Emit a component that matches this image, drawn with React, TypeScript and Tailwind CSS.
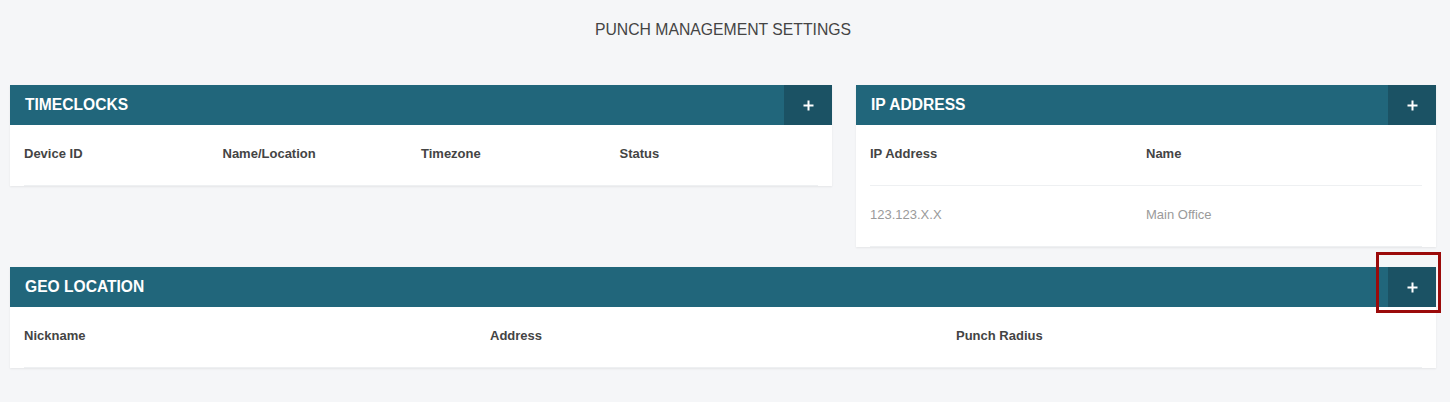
import { ReactNode } from "react";

function PlusButton() {
  return (
    <button className="flex h-full w-[48px] items-center justify-center bg-[#1b5264]">
      <svg width="11" height="11" viewBox="0 0 11 11">
        <path d="M5.5 0.5v10M0.5 5.5h10" stroke="white" strokeWidth="2" />
      </svg>
    </button>
  );
}

function Card({
  title,
  children,
  highlight,
}: {
  title: string;
  children: ReactNode;
  highlight?: boolean;
}) {
  return (
    <section className="bg-white shadow-[0_1px_2px_rgba(0,0,0,0.07)]">
      <header className="relative flex h-[40px] items-center justify-between bg-[#21667b]">
        <h2 className="pl-[15px] text-[15.6px] font-bold text-white">{title}</h2>
        <PlusButton />
        {highlight && (
          <div className="pointer-events-none absolute -top-[15px] -right-[5px] h-[61px] w-[65px] border-[3px] border-[#9b0a0a]" />
        )}
      </header>
      <div className="px-[14px]">{children}</div>
    </section>
  );
}

function Row({ cols, head, grid }: { cols: string[]; head?: boolean; grid: string }) {
  return (
    <div className={`grid h-[61px] items-center border-b border-[#eef0f2] pb-[2px] ${grid}`}>
      {cols.map((c) => (
        <div
          key={c}
          className={head ? "text-[13px] font-bold text-[#444]" : "text-[13px] text-[#9a9a9a]"}
        >
          {c}
        </div>
      ))}
    </div>
  );
}

export default function App() {
  return (
    <main
      className="min-h-screen bg-[#f5f6f8] pl-[10px] pr-[14px]"
      style={{ fontFamily: '"Liberation Sans", Arial, sans-serif' }}
    >
      <h1 className="pt-[21px] pb-[46px] text-center text-[15.75px] leading-[18px] text-[#444]">
        PUNCH MANAGEMENT SETTINGS
      </h1>

      <div className="grid grid-cols-[822px_1fr] items-start gap-x-[24px]">
        <Card title="TIMECLOCKS">
          <Row head grid="grid-cols-4" cols={["Device ID", "Name/Location", "Timezone", "Status"]} />
        </Card>
        <Card title="IP ADDRESS">
          <Row head grid="grid-cols-2" cols={["IP Address", "Name"]} />
          <Row grid="grid-cols-2" cols={["123.123.X.X", "Main Office"]} />
        </Card>
      </div>

      <div className="mt-[20px]">
        <Card title="GEO LOCATION" highlight>
          <Row head grid="grid-cols-3" cols={["Nickname", "Address", "Punch Radius"]} />
        </Card>
      </div>
    </main>
  );
}
